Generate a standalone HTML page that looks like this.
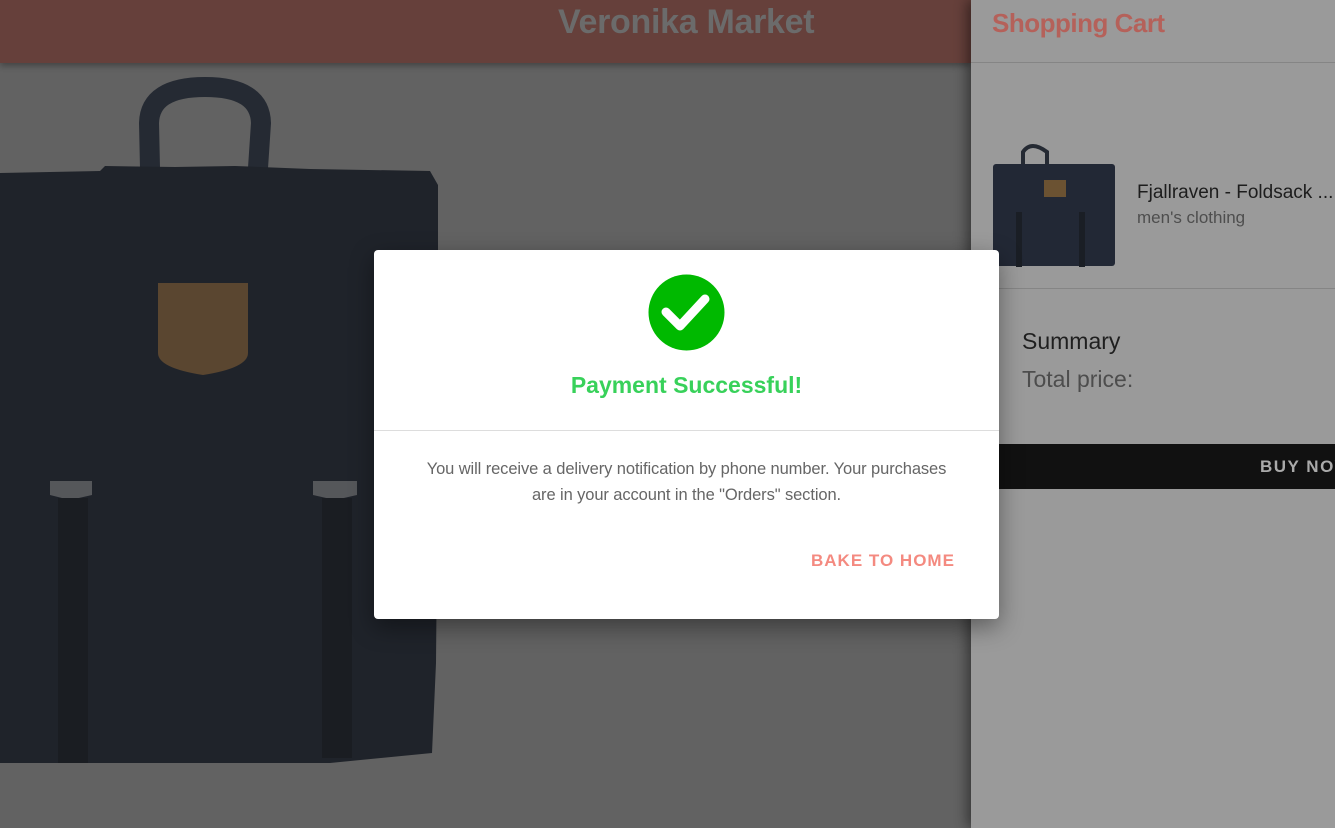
<!DOCTYPE html>
<html><head><meta charset="utf-8"><style>
html,body{margin:0;padding:0;width:1335px;height:828px;overflow:hidden;font-family:"Liberation Sans",sans-serif;}
body{background:#626262;position:relative;}
.hdr{position:absolute;left:0;top:0;width:971px;height:63px;background:#66403b;box-shadow:0 3px 6px rgba(0,0,0,.3);}
.hdr span{position:absolute;left:558px;top:3px;font-size:34px;font-weight:bold;color:#6b6b6b;letter-spacing:-0.3px;white-space:nowrap;}
.panel{position:absolute;left:971px;top:0;width:364px;height:828px;background:#9a9a9a;box-shadow:-4px 0 12px rgba(0,0,0,.45);}
.panel .t{position:absolute;left:21px;top:8px;font-size:26px;font-weight:bold;color:#b5615a;letter-spacing:-0.5px;}
.line{position:absolute;left:0;width:364px;height:1px;background:#858585;}
.name{position:absolute;left:166px;top:182px;font-size:19px;color:#1d1d1d;white-space:nowrap;}
.cat{position:absolute;left:166px;top:208px;font-size:17px;color:#4e4e4e;}
.sum{position:absolute;left:51px;top:328px;font-size:23px;color:#1f1f1f;}
.tp{position:absolute;left:51px;top:366px;font-size:23px;color:#4d4d4d;}
.buy{position:absolute;left:28px;top:444px;width:336px;height:45px;background:#111;}
.buy span{position:absolute;left:261px;top:13px;color:#aaa;font-weight:bold;font-size:17px;letter-spacing:1.5px;white-space:nowrap;}
.modal{position:absolute;left:374px;top:250px;width:625px;height:369px;background:#fff;border-radius:4px;box-shadow:0 8px 24px rgba(0,0,0,.4);}
.title{position:absolute;left:0;top:122px;width:625px;text-align:center;font-size:23px;font-weight:bold;color:#38d15a;}
.div{position:absolute;left:0;top:180px;width:625px;height:1px;background:#ddd;}
.msg{position:absolute;left:37px;top:206px;width:551px;text-align:center;font-size:16.5px;line-height:26px;color:#666;letter-spacing:-0.1px;}
.btn{position:absolute;left:437px;top:301px;font-size:17px;font-weight:bold;color:#f48a80;letter-spacing:1px;}
</style></head><body>
<svg style="position:absolute;left:0;top:63px" width="971" height="765">
<rect width="971" height="765" fill="#626262"/>
<path d="M150 105 L149 60 Q150 24 205 24 Q260 24 261 60 L258 105" stroke="#252a33" stroke-width="20" fill="none"/>
<path d="M0 110 L100 108 L105 103 L175 104 L235 103 L310 106 L430 108 L438 122 L438 380 L436 600 L432 690 L330 700 L0 700Z" fill="#1f232a"/>
<path d="M158 220 L248 220 L248 290 Q248 305 203 312 Q158 305 158 290Z" fill="#5a4630"/>
<path d="M50 418 L92 418 L92 432 L70 437 L50 432Z" fill="#55575a"/>
<path d="M313 418 L357 418 L357 432 L335 437 L313 432Z" fill="#55575a"/>
<rect x="58" y="435" width="30" height="265" fill="#1a1d22"/>
<rect x="322" y="435" width="30" height="260" fill="#1a1d22"/>
</svg>
<div class="hdr"><span>Veronika Market</span></div>
<div class="panel">
<div class="t">Shopping Cart</div>
<div class="line" style="top:62px"></div>
<svg style="position:absolute;left:20px;top:142px" width="125" height="126">
<path d="M32 22 L32 10 Q40 -2 56 10 L56 22" stroke="#252a33" stroke-width="4" fill="none"/>
<rect x="2" y="22" width="122" height="102" rx="3" fill="#222835"/>
<rect x="53" y="38" width="22" height="17" fill="#6b5232"/>
<rect x="25" y="70" width="6" height="55" fill="#1a1e25"/><rect x="88" y="70" width="6" height="55" fill="#1a1e25"/>
</svg>
<div class="name">Fjallraven - Foldsack ...</div>
<div class="cat">men's clothing</div>
<div class="line" style="top:288px"></div>
<div class="sum">Summary</div>
<div class="tp">Total price:</div>
<div class="buy"><span>BUY NOW</span></div>
</div>
<div class="modal">
<svg style="position:absolute;left:274px;top:24px" width="77" height="77"><circle cx="38.5" cy="38.5" r="38" fill="#00b900"/><path d="M18 38 L32 52 L57 25" stroke="#fff" stroke-width="9" fill="none" stroke-linecap="round" stroke-linejoin="round"/></svg>
<div class="title">Payment Successful!</div>
<div class="div"></div>
<div class="msg">You will receive a delivery notification by phone number. Your purchases<br>are in your account in the "Orders" section.</div>
<div class="btn">BAKE TO HOME</div>
</div>
</body></html>
